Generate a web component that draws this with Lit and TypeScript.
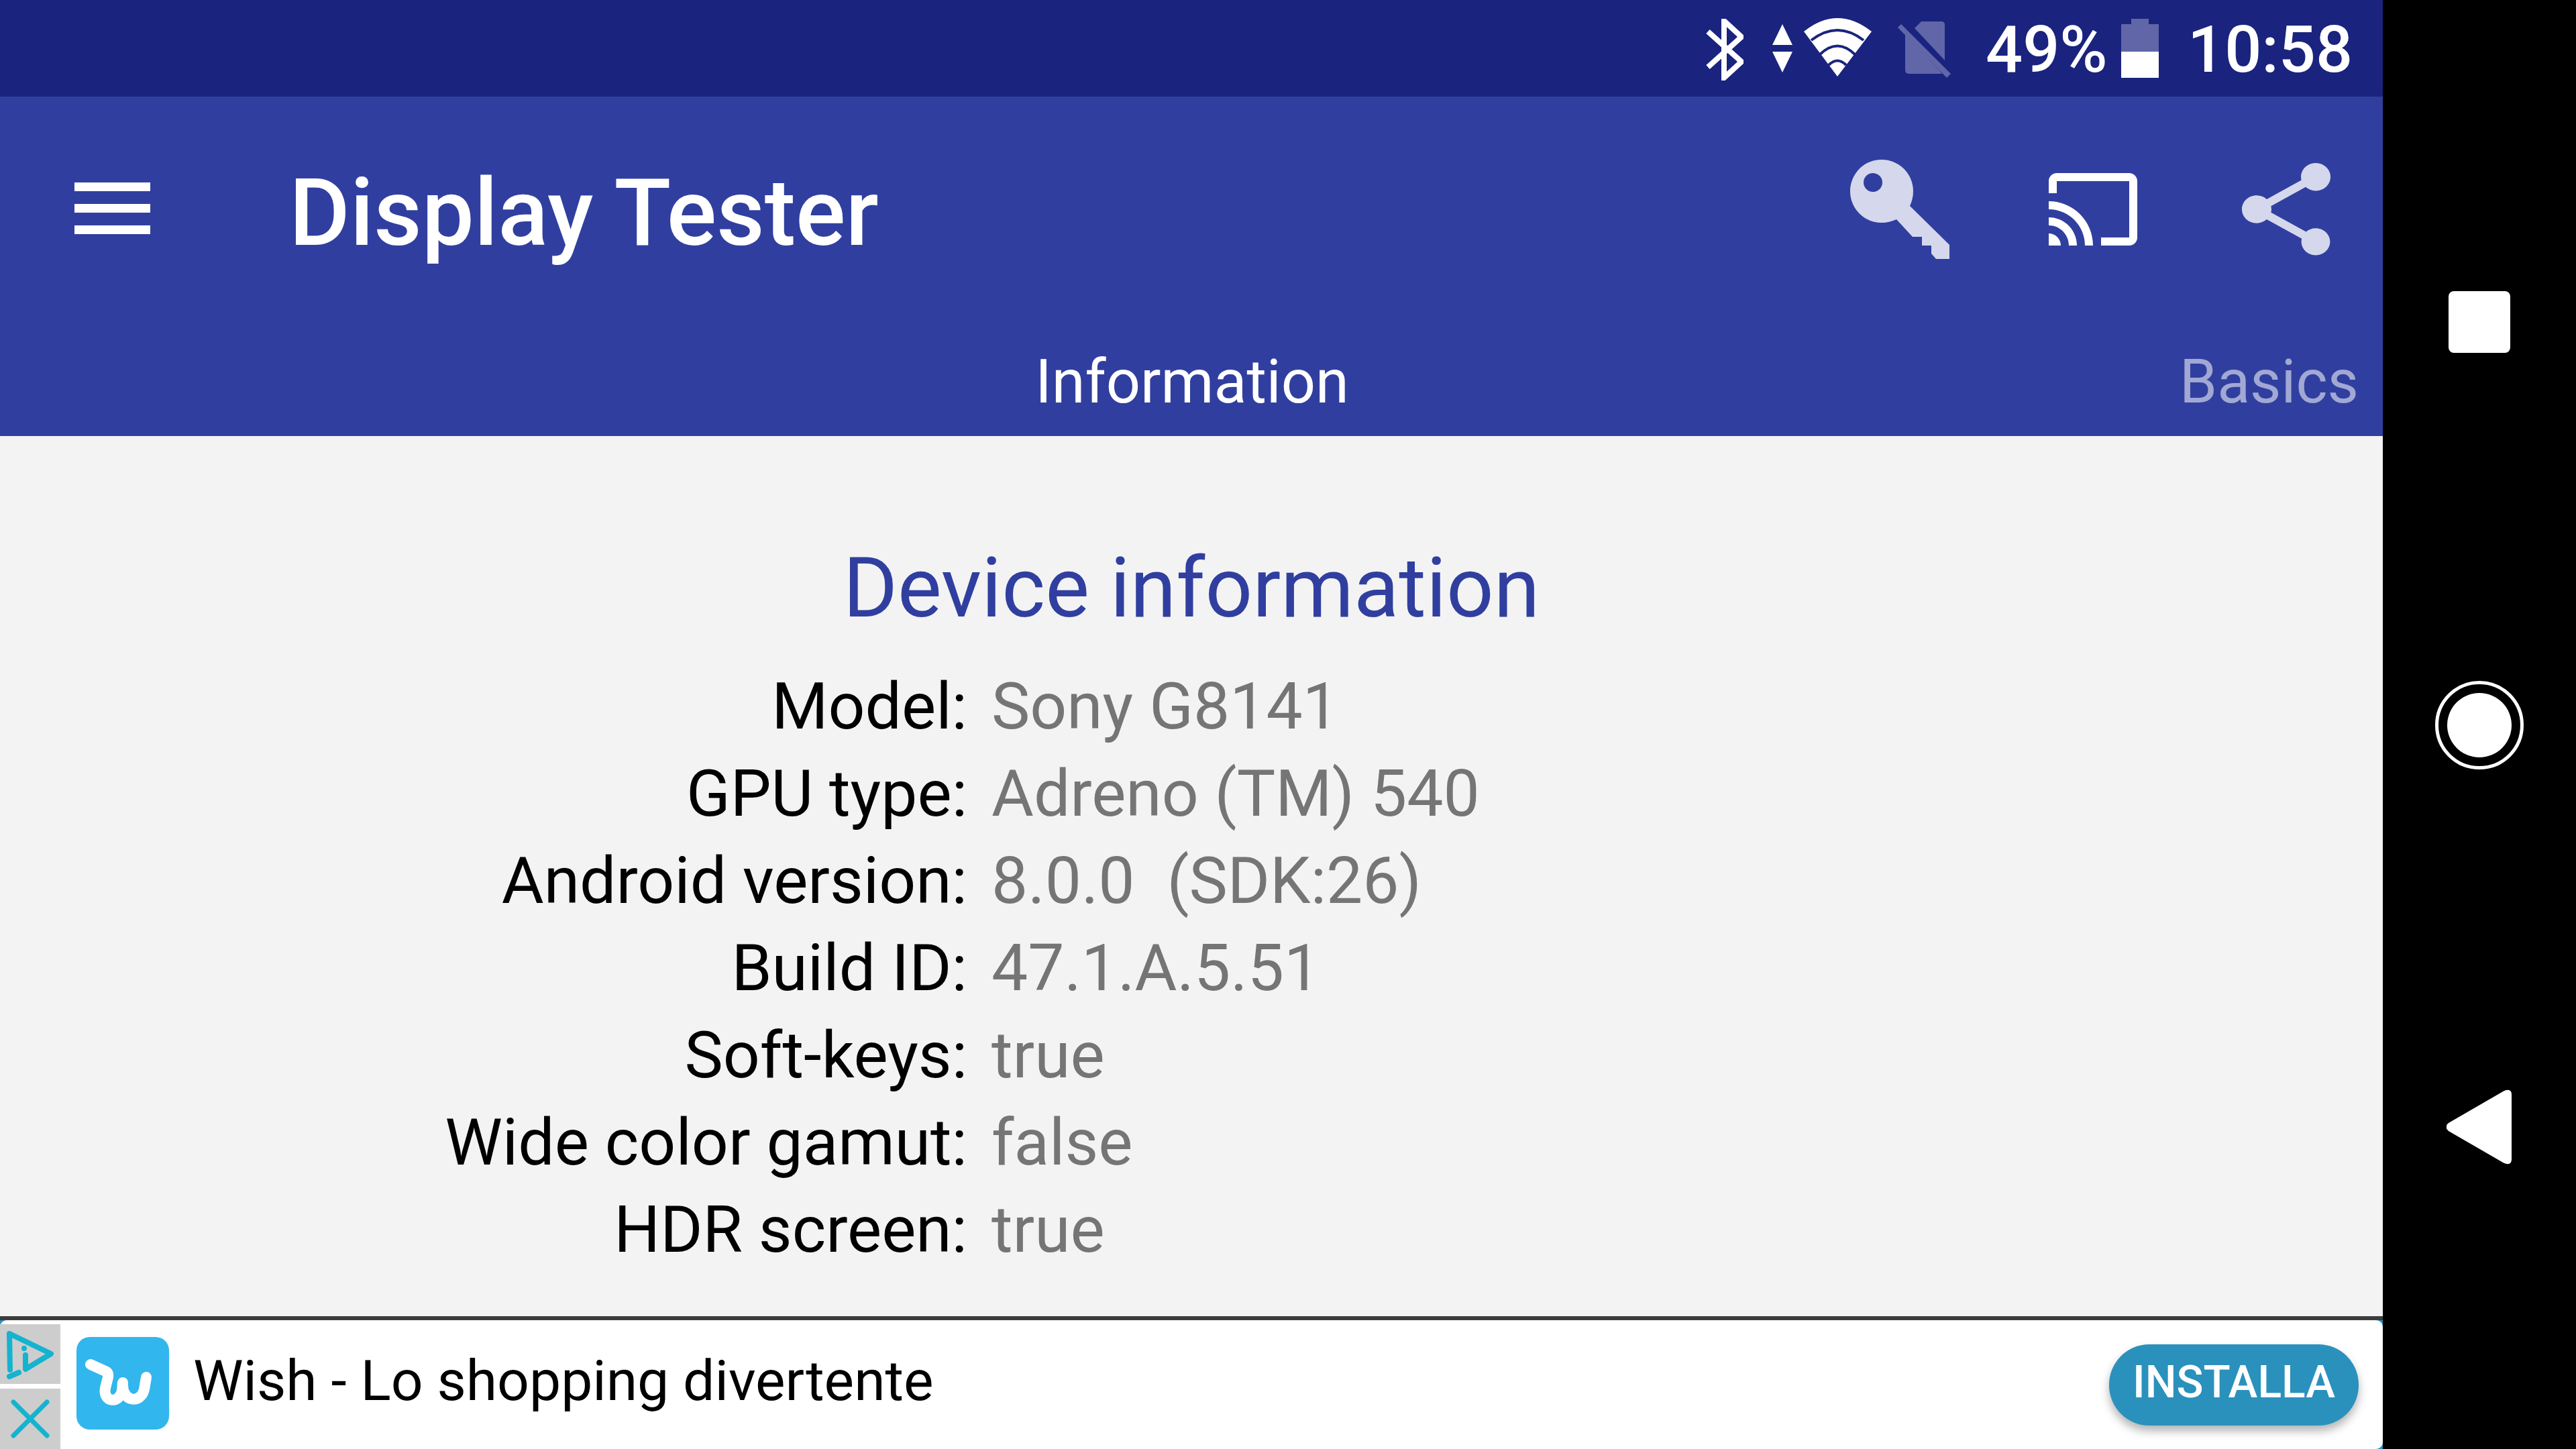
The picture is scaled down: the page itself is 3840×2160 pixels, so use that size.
import { LitElement, html, css } from "lit";
import { customElement } from "lit/decorators.js";

const rows: [string, string][] = [
  ["Model:", "Sony G8141"],
  ["GPU type:", "Adreno (TM) 540"],
  ["Android version:", "8.0.0  (SDK:26)"],
  ["Build ID:", "47.1.A.5.51"],
  ["Soft-keys:", "true"],
  ["Wide color gamut:", "false"],
  ["HDR screen:", "true"],
];

@customElement("app-root")
export class AppRoot extends LitElement {
  static styles = css`
    :host { display: block; width: 3840px; height: 2160px; background: #000; overflow: hidden; font-family: Roboto, "Liberation Sans", sans-serif; }
    .frame { display: grid; grid-template-columns: 3552px 288px; height: 2160px; }
    .app { display: flex; flex-direction: column; height: 2160px; min-width: 0; }
    .status { height: 144px; background: #1a237e; display: flex; align-items: center; color: #fff; font-size: 97px; font-weight: 500; padding-left: 2543px; }
    .status svg { display: block; flex: none; }
    .bt { margin-top: 3px; }
    .arrows { margin-left: 43px; }
    .wifi { margin-left: 16px; margin-top: -2px; }
    .sim { margin-left: 38px; margin-top: 4px; }
    .pct { margin-left: 50px; line-height: 144px; width: 202px; margin-top: 4px; }
    .time { margin-left: 43px; line-height: 144px; margin-top: 4px; }
    .bar { background: #303f9f; height: 506px; display: flex; flex-direction: column; color: #fff; }
    .tools { height: 336px; display: flex; align-items: center; }
    .tools svg { display: block; flex: none; }
    .menu { margin-left: 111px; width: 113px; height: 77px; display: flex; flex-direction: column; justify-content: space-between; margin-top: -4px; }
    .menu i { display: block; height: 13px; background: #fff; }
    .title { margin-left: 207px; font-size: 139px; font-weight: 500; line-height: 1; margin-top: 10px; }
    .key { margin-left: auto; }
    .cast { margin-left: 148px; }
    .share { margin-left: 156px; margin-right: 78px; }
    .tabs { height: 170px; display: grid; grid-template-columns: 1fr auto 1fr; align-items: center; font-size: 90px; padding: 8px 36px 0 38px; box-sizing: border-box; }
    .tabs .on { grid-column: 2; }
    .tabs .off { grid-column: 3; text-align: right; color: rgba(255,255,255,.55); }
    .content { flex: 1; background: #f3f3f3; display: flex; flex-direction: column; align-items: center; padding-top: 152px; box-sizing: border-box; }
    h1 { margin: 0; font-weight: 400; font-size: 124px; color: #303f9f; line-height: 150px; }
    .grid { margin-top: 36px; width: 100%; display: grid; grid-template-columns: 1442px 1fr; column-gap: 36px; grid-auto-rows: 130px; align-items: center; font-size: 96.5px; }
    .k { text-align: right; color: #000; }
    .v { color: #757575; white-space: pre; }
    .ad { height: 198px; box-sizing: border-box; border-top: 6px solid #3c3c3c; background: #2a91bd; flex: none; }
    .ad-in { height: 192px; background: #fff; border-radius: 10px; display: flex; align-items: center; }
    .side { width: 90px; height: 192px; padding-top: 6px; box-sizing: border-box; display: flex; flex-direction: column; gap: 7px; flex: none; }
    .side div { flex: 1; background: #cdcdcd; }
    .side svg { display: block; }
    .logo { margin-left: 24px; display: block; flex: none; margin-top: -4px; }
    .ad-text { margin-left: 36px; font-size: 84px; color: #000; margin-top: -12px; }
    .btn { margin-left: auto; margin-right: 36px; width: 372px; height: 121px; box-sizing: border-box; padding-bottom: 8px; border-radius: 60px; background: #2a91bd; color: #fff; font-size: 66px; font-weight: 500; display: flex; align-items: center; justify-content: center; box-shadow: 0 8px 14px rgba(0,0,0,.3); }
    .nav { display: flex; flex-direction: column; align-items: center; padding-top: 434px; box-sizing: border-box; }
    .nav svg { display: block; flex: none; }
    .circle { margin-top: 489px; }
    .tri { margin-top: 477px; }
  `;

  render() {
    return html`
      <div class="frame">
        <div class="app">
          <div class="status">
            <svg class="bt" width="56" height="92" viewBox="2543 28 56 92"><path d="M2546 47L2596 92L2570 116V31L2596 55L2546 100" fill="none" stroke="#fff" stroke-width="8"/></svg>
            <svg class="arrows" width="30" height="72" viewBox="2640 35 30 72"><path d="M2655 35L2670 66H2640ZM2640 76H2670L2655 107Z" fill="#fff"/></svg>
            <svg class="wifi" width="102" height="88" viewBox="2686 27 102 88"><path d="M2687 47Q2737 7 2788 47L2737 114Z" fill="#fff"/><g fill="none" stroke="#1a237e" stroke-width="4"><path d="M2698 60Q2737 30 2776 60"/><path d="M2710 82Q2737 55 2764 82"/><path d="M2724 97Q2737 84 2750 97"/></g></svg>
            <svg class="sim" width="82" height="88" viewBox="2826 30 82 88"><g fill="#6066a8"><path d="M2852 42L2862 32H2892Q2897 32 2897 37V90Z"/><path d="M2838 50V104Q2838 110 2844 110H2893L2890 106Z"/><path d="M2827 41L2832 36L2906 110L2900 116Z"/></g></svg>
            <div class="pct">49%</div>
            <svg class="batt" width="56" height="88" viewBox="3162 28 56 88"><path d="M3177 28H3203V36H3218V77H3162V36H3177Z" fill="#6066a8"/><rect x="3162" y="77" width="56" height="39" fill="#fff"/></svg>
            <div class="time">10:58</div>
          </div>
          <div class="bar">
            <div class="tools">
              <div class="menu"><i></i><i></i><i></i></div>
              <div class="title">Display Tester</div>
              <svg class="key" width="148" height="148" viewBox="0 0 148 148"><path fill-rule="evenodd" fill="#d5d8ec" d="M47 0C73 0 94 21 94 47Q94 58 89 69L148 127V148H128L121 140V128H107V115H93L69 89Q58 94 47 94C21 94 0 73 0 47S21 0 47 0ZM34 20A14 14 0 1 0 34.01 48A14 14 0 1 0 34 20Z"/></svg>
              <svg class="cast" width="132" height="108" viewBox="1 3 22 18"><path fill="#fff" d="M21 3H3c-1.1 0-2 .9-2 2v3h2V5h18v14h-7v2h7c1.1 0 2-.9 2-2V5c0-1.1-.9-2-2-2zM1 18v3h3c0-1.66-1.34-3-3-3zm0-4v2c2.76 0 5 2.24 5 5h2c0-3.87-3.13-7-7-7zm0-4v2c4.97 0 9 4.03 9 9h2c0-6.08-4.93-11-11-11z"/></svg>
              <svg class="share" width="132" height="138" viewBox="3 2 18 20" preserveAspectRatio="none"><path fill="#d5d8ec" d="M18 16.08c-.76 0-1.44.3-1.96.77L8.91 12.7c.05-.23.09-.46.09-.7s-.04-.47-.09-.7l7.05-4.11c.54.5 1.25.81 2.04.81 1.66 0 3-1.34 3-3s-1.34-3-3-3-3 1.34-3 3c0 .24.04.47.09.7L8.04 9.81C7.5 9.31 6.79 9 6 9c-1.66 0-3 1.34-3 3s1.34 3 3 3c.79 0 1.5-.31 2.04-.81l7.12 4.16c-.05.21-.08.43-.08.65 0 1.61 1.31 2.92 2.92 2.92s2.92-1.31 2.92-2.92-1.31-2.92-2.92-2.92z"/></svg>
            </div>
            <div class="tabs"><div class="on">Information</div><div class="off">Basics</div></div>
          </div>
          <div class="content">
            <h1>Device information</h1>
            <div class="grid">
              ${rows.map(([k, v]) => html`<div class="k">${k}</div><div class="v">${v}</div>`)}
            </div>
          </div>
          <div class="ad">
            <div class="ad-in">
              <div class="side">
                <div><svg width="90" height="89" viewBox="0 0 90 89"><g fill="none" stroke="#14b3cf" stroke-width="8" stroke-linecap="round" stroke-linejoin="round"><path d="M15 68L14 14L76 44L38 67V46"/><path d="M14 78L28 72"/></g><circle cx="36" cy="36" r="4" fill="#14b3cf"/></svg></div>
                <div><svg width="90" height="90" viewBox="0 0 90 90"><path d="M20 20L70 70M70 20L20 70" fill="none" stroke="#14b3cf" stroke-width="7" stroke-linecap="round"/></svg></div>
              </div>
              <svg class="logo" width="138" height="138" viewBox="0 0 138 138"><rect width="138" height="138" rx="20" fill="#32b6ee"/><path d="M21 41L43 51Q48 53 47 60L43 76C39 98 64 100 68 80L69 68C67 98 96 100 101 78L104 60" fill="none" stroke="#fff" stroke-width="16" stroke-linecap="round" stroke-linejoin="round"/></svg>
              <div class="ad-text">Wish - Lo shopping divertente</div>
              <div class="btn">INSTALLA</div>
            </div>
          </div>
        </div>
        <div class="nav">
          <svg width="92" height="92" viewBox="0 0 92 92"><rect width="92" height="92" rx="8" fill="#fff"/></svg>
          <svg class="circle" width="132" height="132" viewBox="0 0 132 132"><circle cx="66" cy="66" r="63.5" fill="none" stroke="#fff" stroke-width="5"/><circle cx="66" cy="66" r="48" fill="#fff"/></svg>
          <svg class="tri" width="98" height="112" viewBox="0 0 98 112"><path d="M3 50L86 2Q97 -2 97 8V104Q97 114 86 110L3 62Q-4 56 3 50Z" fill="#fff"/></svg>
        </div>
      </div>
    `;
  }
}
